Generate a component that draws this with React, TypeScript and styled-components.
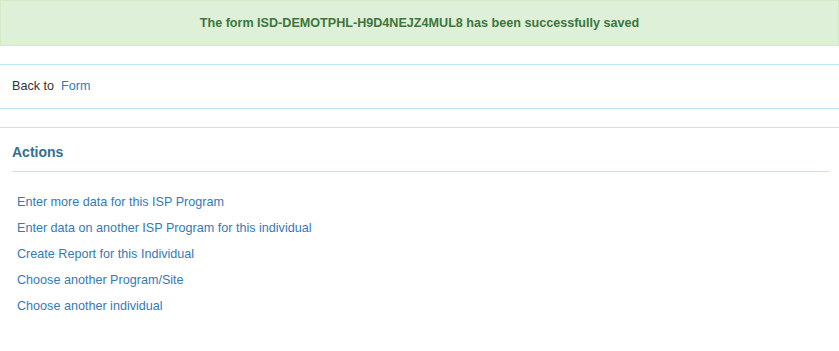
import React from "react";
import styled, { createGlobalStyle } from "styled-components";

const Global = createGlobalStyle`
  html, body { margin: 0; padding: 0; background: #fff; }
  body { font-family: "Liberation Sans", Arial, sans-serif; font-size: 12.6px; color: #333; }
`;

const Page = styled.div`
  display: flex;
  flex-direction: column;
`;

const SuccessAlert = styled.div`
  background: #dff0d8;
  border: 1px solid #d6e9c6;
  color: #3c763d;
  font-weight: bold;
  text-align: center;
  padding: 13px 15px;
  line-height: 18px;
`;

const NavBar = styled.div`
  box-sizing: border-box;
  margin-top: 18px;
  border-top: 1px solid #bce8f1;
  border-bottom: 1px solid #bce8f1;
  height: 45px;
  display: flex;
  align-items: center;
  padding: 0 12px 2px;
  gap: 7px;
`;

const Link = styled.a`
  color: #337ab7;
  text-decoration: none;
  cursor: pointer;
`;

const ActionsPanel = styled.section`
  margin-top: 18px;
  border-top: 1px solid #bce8f1;
`;

const Heading = styled.h3`
  box-sizing: border-box;
  margin: 0 10px 0 12px;
  height: 44px;
  padding-top: 4px;
  display: flex;
  align-items: center;
  border-bottom: 1px solid #bce8f1;
  color: #31708f;
  font-size: 14px;
  font-weight: bold;
`;

const ActionList = styled.ul`
  list-style: none;
  margin: 0;
  padding: 17px 0 0 17px;
  display: flex;
  flex-direction: column;
`;

const ActionItem = styled.li`
  line-height: 26px;
`;

const actions = [
  "Enter more data for this ISP Program",
  "Enter data on another ISP Program for this individual",
  "Create Report for this Individual",
  "Choose another Program/Site",
  "Choose another individual",
];

export default function App() {
  return (
    <Page>
      <Global />
      <SuccessAlert>The form ISD-DEMOTPHL-H9D4NEJZ4MUL8 has been successfully saved</SuccessAlert>
      <NavBar>
        <span>Back to</span>
        <Link>Form</Link>
      </NavBar>
      <ActionsPanel>
        <Heading>Actions</Heading>
        <ActionList>
          {actions.map((a) => (
            <ActionItem key={a}>
              <Link>{a}</Link>
            </ActionItem>
          ))}
        </ActionList>
      </ActionsPanel>
    </Page>
  );
}
